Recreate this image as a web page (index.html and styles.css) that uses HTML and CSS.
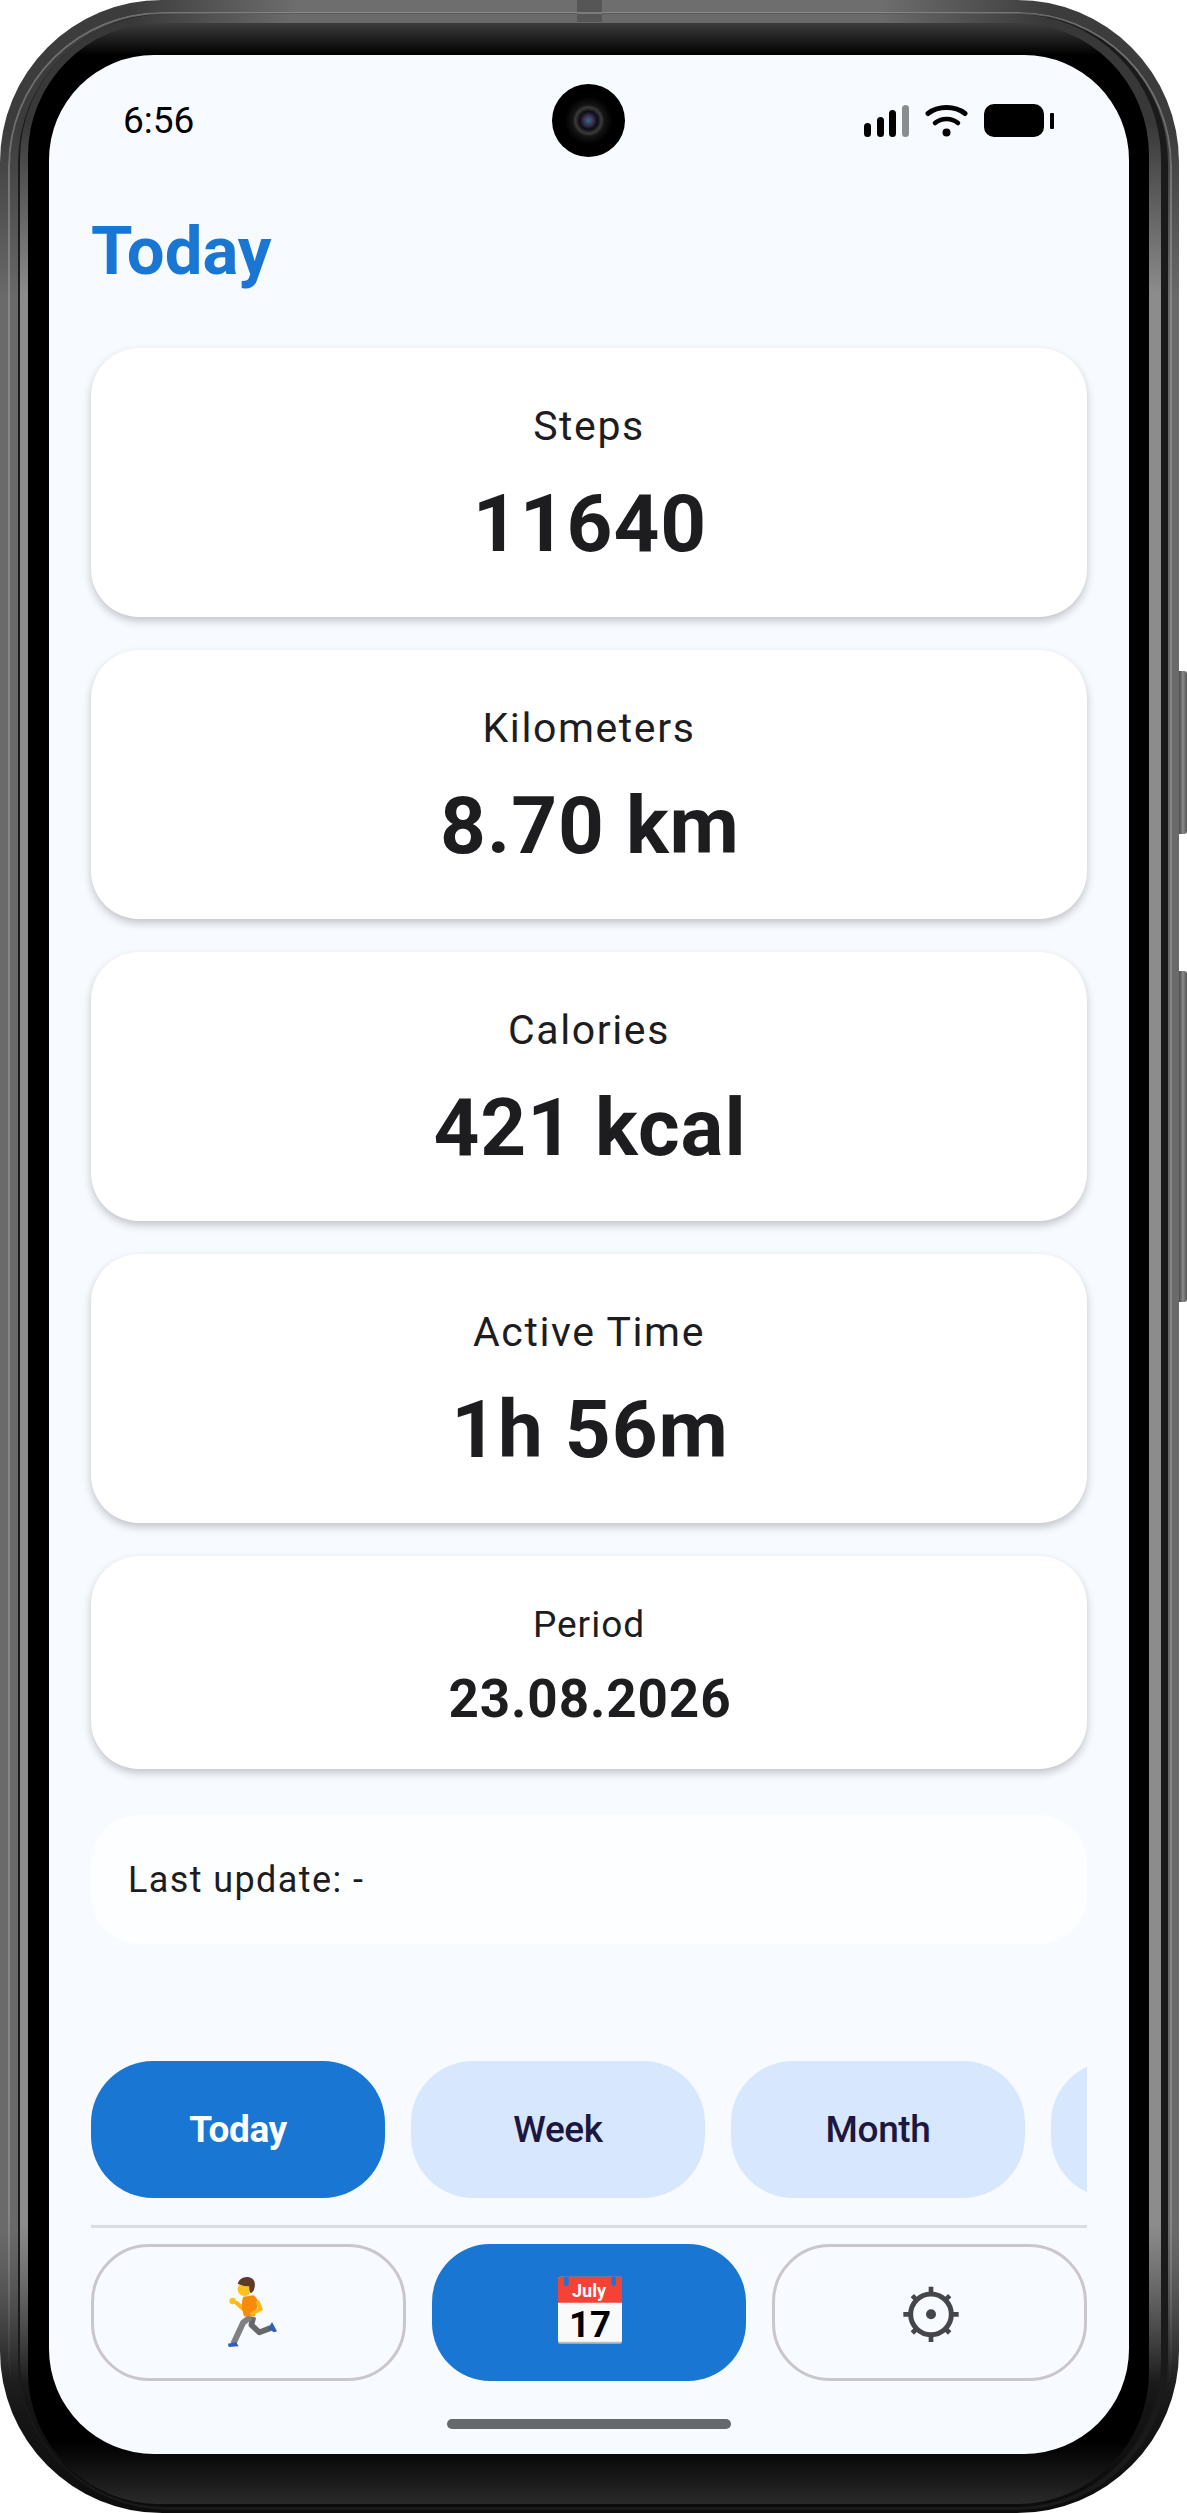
FILE: index.html
```html
<!DOCTYPE html>
<html lang="en">
<head>
    <meta charset="UTF-8">
    <meta name="viewport" content="width=device-width, initial-scale=1.0">
    <title>Today</title>
    <link rel="stylesheet" href="styles.css">
</head>
<body>
    <div class="phone">
        <div class="antenna"></div>
        <div class="side-key side-key-power"></div>
        <div class="side-key side-key-volume"></div>
        <div class="rim-dark">
            <div class="rim-light">
                <div class="bezel">
                    <main class="screen">
                        <div class="status-bar">
                            <span class="clock">6:56</span>
                            <div class="camera"></div>
                            <div class="status-icons">
                                <svg class="icon-signal" viewBox="0 0 45 32">
                                    <rect x="0" y="18" width="7" height="14" rx="3.5"/>
                                    <rect x="13" y="12" width="7" height="20" rx="3.5"/>
                                    <rect x="25" y="5" width="7" height="27" rx="3.5"/>
                                    <rect x="38" y="0" width="7" height="32" rx="3.5" fill="#8a8c8e"/>
                                </svg>
                                <svg class="icon-wifi" viewBox="0 0 43 32">
                                    <path d="M3 8.5C13 0.5 30 0.5 40 8.5" fill="none" stroke="#000" stroke-width="5" stroke-linecap="round"/>
                                    <path d="M10 18C16 12.5 27 12.5 33 18" fill="none" stroke="#000" stroke-width="4.5" stroke-linecap="round"/>
                                    <circle cx="21.5" cy="27.5" r="4"/>
                                </svg>
                                <svg class="icon-battery" viewBox="0 0 70 33">
                                    <rect x="0" y="0" width="60" height="33" rx="10"/>
                                    <rect x="66" y="9" width="4" height="16" rx="1"/>
                                </svg>
                            </div>
                        </div>

                        <h1 class="page-title">Today</h1>

                        <div class="stats">
                            <div class="stat-card">
                                <div class="stat-label">Steps</div>
                                <div class="stat-value">11640</div>
                            </div>
                            <div class="stat-card">
                                <div class="stat-label">Kilometers</div>
                                <div class="stat-value">8.70 km</div>
                            </div>
                            <div class="stat-card">
                                <div class="stat-label">Calories</div>
                                <div class="stat-value">421 kcal</div>
                            </div>
                            <div class="stat-card">
                                <div class="stat-label">Active Time</div>
                                <div class="stat-value">1h 56m</div>
                            </div>
                            <div class="stat-card stat-card-small">
                                <div class="stat-label">Period</div>
                                <div class="stat-value">23.08.2026</div>
                            </div>
                        </div>

                        <div class="update-card">Last update: -</div>

                        <div class="filters">
                            <button class="filter filter-active">Today</button>
                            <button class="filter">Week</button>
                            <button class="filter">Month</button>
                            <button class="filter"></button>
                        </div>

                        <div class="divider"></div>

                        <nav class="nav">
                            <button class="nav-button">
                                <svg class="nav-icon" viewBox="-6 6 360 300">
                                    <!-- back leg -->
                                    <path d="M190 168L184 192L208 214L242 201" fill="none" stroke="#686868" stroke-width="17" stroke-linejoin="round"/>
                                    <!-- front leg -->
                                    <path d="M182 168L160 184L130 248" fill="none" stroke="#808080" stroke-width="18" stroke-linejoin="round"/>
                                    <path d="M114 248L138 243L146 256L116 258Z" fill="#2f5fb8"/>
                                    <path d="M246 183L261 211L252 214L234 203Z" fill="#2f5fb8"/>
                                    <!-- far arm -->
                                    <path d="M158 142L140 126" fill="none" stroke="#f9b90f" stroke-width="13" stroke-linecap="round"/>
                                    <circle cx="128" cy="120" r="10" fill="#fcc21b"/>
                                    <!-- torso -->
                                    <path d="M160 107L190 103Q204 112 204 128L194 166L162 166Q150 130 160 107Z" fill="#f58a0b"/>
                                    <!-- near arm -->
                                    <path d="M204 124L212 144L186 158" fill="none" stroke="#fbb917" stroke-width="12" stroke-linecap="round" stroke-linejoin="round"/>
                                    <!-- head -->
                                    <ellipse cx="163" cy="85" rx="20" ry="20" fill="#fcc21b"/>
                                    <path d="M143 68Q150 46 175 48Q198 52 194 78Q192 92 182 97Q176 86 178 76Q160 76 143 68Z" fill="#5d3a2a"/>
                                </svg>
                            </button>
                            <button class="nav-button nav-button-active">
                                <svg class="nav-icon" viewBox="-4 6 360 300">
                                    <rect x="83" y="47" width="192" height="201" rx="6" fill="#bdbdbd"/>
                                    <rect x="83" y="110" width="192" height="132" rx="4" fill="#fafafa"/>
                                    <path d="M83 125V53Q83 47 89 47H269Q275 47 275 53V125Z" fill="#f44336"/>
                                    <path d="M101 47H115V68A7 7 0 0 1 101 68Z" fill="#1976d2"/>
                                    <path d="M243 47H257V68A7 7 0 0 1 243 68Z" fill="#1976d2"/>
                                    <text class="cal-month" x="176" y="107">July</text>
                                    <text class="cal-day" x="179" y="228">17</text>
                                </svg>
                            </button>
                            <button class="nav-button">
                                <svg class="nav-icon" viewBox="0 6 360 300">
                                    <g stroke="#44464c" stroke-width="14">
                                        <path d="M183 77V102M183 218V243M100 160H125M241 160H266"/>
                                        <path d="M127 104L145 122M239 104L221 122M127 216L145 198M239 216L221 198"/>
                                    </g>
                                    <circle cx="183" cy="160" r="61" fill="#f7faff" stroke="#44464c" stroke-width="15"/>
                                    <circle cx="183" cy="160" r="15" fill="#44464c"/>
                                </svg>
                            </button>
                        </nav>

                        <div class="home-bar"></div>
                    </main>
                </div>
            </div>
        </div>
    </div>
</body>
</html>
```

FILE: styles.css
```css
body {
    margin: 0;
    width: 1187px;
    height: 2513px;
    background-color: #fff;
    font-family: Roboto, "Liberation Sans", sans-serif;
    overflow: hidden;
}

/* Phone frame, outside in. The straight edges are lighter than the corners */
.phone {
    position: relative;
    box-sizing: border-box;
    width: 1179px;
    height: 2513px;
    padding: 13px 11px 3px 18px;
    border-radius: 162px;
    background:
        linear-gradient(90deg, transparent 130px, #6e6e6e 300px, #6e6e6e 880px, transparent 1050px) top / 100% 24px no-repeat,
        linear-gradient(transparent 130px, #6a6a6a 300px, #6a6a6a 2230px, transparent 2380px),
        linear-gradient(#3c3c3c 90%, #161616 96%, #0c0c0c);
}
/* thin highlight running round the rim */
.phone::after {
    content: "";
    position: absolute;
    top: 12px;
    left: 8px;
    right: 7px;
    bottom: 2px;
    border: 2px solid rgba(170, 170, 170, 0.45);
    border-radius: 154px;
    -webkit-mask-image: linear-gradient(#000 88%, transparent 95%);
    mask-image: linear-gradient(#000 88%, transparent 95%);
}
.rim-dark {
    height: 100%;
    box-sizing: border-box;
    padding: 1px 7px 3px 2px;
    border-radius: 150px;
    background-color: #1a1a1a;
}
.rim-light {
    height: 100%;
    box-sizing: border-box;
    padding: 9px 12px 3px 8px;
    border-radius: 145px;
    background:
        linear-gradient(90deg, transparent 110px, #6a6a6a 270px, #6a6a6a 860px, transparent 1030px) top / 100% 14px no-repeat,
        linear-gradient(transparent 110px, #8c8c8c 280px, #8c8c8c 2210px, transparent 2370px),
        linear-gradient(#383838 90%, #141414 96%, #0c0c0c);
}
.bezel {
    height: 100%;
    box-sizing: border-box;
    padding: 32px 20px 50px 21px;
    border-radius: 132px;
    background: linear-gradient(#3c3c3c, #000 1.3%, #000 97.5%, #2a2a2a);
}
.antenna {
    position: absolute;
    top: 0;
    left: 577px;
    width: 25px;
    height: 22px;
    background-color: #565656;
}
.side-key {
    position: absolute;
    left: 1179px;
    width: 8px;
    border-radius: 0 3px 3px 0;
    background: linear-gradient(90deg, #4a4a4a, #8a8a8a 50%, #555);
}
.side-key-power {
    top: 671px;
    height: 163px;
}
.side-key-volume {
    top: 971px;
    height: 331px;
}

/* Screen */
.screen {
    height: 100%;
    box-sizing: border-box;
    padding: 0 42px;
    border-radius: 105px;
    background-color: #f7faff;
    overflow: hidden;
}

/* Status bar */
.status-bar {
    display: grid;
    grid-template-columns: 1fr auto 1fr;
    align-items: center;
    height: 73px;
    margin: 29px -42px 0;
    padding: 0 75px 0 74px;
}
.clock {
    font-size: 37px;
    color: #000;
}
.camera {
    width: 73px;
    height: 73px;
    border-radius: 50%;
    background: radial-gradient(circle, #2f6f86 0, #3a3050 5px, #0c0c12 9px, #3a3a3a 13px, #141414 16px, #000 24px);
}
.status-icons {
    display: flex;
    justify-content: flex-end;
    align-items: center;
    gap: 16px;
}
.icon-signal {
    width: 45px;
    height: 32px;
}
.icon-wifi {
    width: 43px;
    height: 32px;
}
.icon-battery {
    width: 70px;
    height: 33px;
}

.page-title {
    margin: 56px 0 58px;
    font-size: 67px;
    line-height: 77px;
    font-weight: 700;
    color: #1976d2;
}

/* Stat cards */
.stats {
    display: flex;
    flex-direction: column;
    gap: 33px;
}
.stat-card {
    height: 269px;
    box-sizing: border-box;
    padding-top: 55px;
    border-radius: 48px;
    background-color: #fff;
    box-shadow: 0 4px 9px rgba(0, 0, 0, 0.22);
    text-align: center;
    color: #1d1d1f;
}
.stat-label {
    font-size: 41px;
    line-height: 47px;
    letter-spacing: 1.6px;
}
.stat-value {
    margin-top: 27px;
    padding-left: 2px;
    font-size: 80px;
    line-height: 94px;
    font-weight: 700;
    letter-spacing: 1px;
}
.stat-card-small {
    height: 213px;
    padding-top: 48px;
}
.stat-card-small .stat-label {
    font-size: 37px;
    line-height: 42px;
    letter-spacing: 1px;
}
.stat-card-small .stat-value {
    margin-top: 21px;
    font-size: 53px;
    line-height: 64px;
    letter-spacing: 0.9px;
}

.update-card {
    display: flex;
    align-items: center;
    height: 129px;
    box-sizing: border-box;
    margin-top: 46px;
    padding-left: 37px;
    border-radius: 48px;
    background-color: #fdfeff;
    font-size: 36px;
    letter-spacing: 1.4px;
    color: #1d1d1f;
}

/* Period filters, the last one runs off the edge */
.filters {
    display: flex;
    gap: 26px;
    margin-top: 117px;
    overflow: hidden;
}
.filter {
    flex: 0 0 294px;
    height: 137px;
    padding: 0;
    border: none;
    border-radius: 62px;
    background-color: #d7e7fd;
    font-family: Roboto, "Liberation Sans", sans-serif;
    font-size: 37px;
    font-weight: 500;
    letter-spacing: -0.4px;
    color: #1d1640;
}
.filter-active {
    background-color: #1976d2;
    font-weight: 700;
    letter-spacing: -0.4px;
    color: #fff;
}

.divider {
    height: 3px;
    margin-top: 27px;
    background-color: #dcdce3;
}

/* Bottom navigation */
.nav {
    display: grid;
    grid-template-columns: repeat(3, 1fr);
    gap: 26px;
    margin-top: 16px;
}
.nav-button {
    display: flex;
    justify-content: center;
    align-items: center;
    height: 137px;
    padding: 0;
    border: 3px solid #c9c6cc;
    border-radius: 58px;
    background-color: #f7faff;
}
.nav-button-active {
    border: none;
    background-color: #1976d2;
}
.nav-icon {
    width: 120px;
    height: 100px;
}
.cal-month {
    font-family: Roboto, "Liberation Sans", sans-serif;
    font-size: 54px;
    font-weight: 700;
    text-anchor: middle;
    fill: #fff;
}
.cal-day {
    font-family: Roboto, "Liberation Sans", sans-serif;
    font-size: 110px;
    font-weight: 700;
    text-anchor: middle;
    fill: #000;
}

.home-bar {
    width: 284px;
    height: 10px;
    margin: 38px auto 0;
    border-radius: 5px;
    background-color: #66696c;
}
```
